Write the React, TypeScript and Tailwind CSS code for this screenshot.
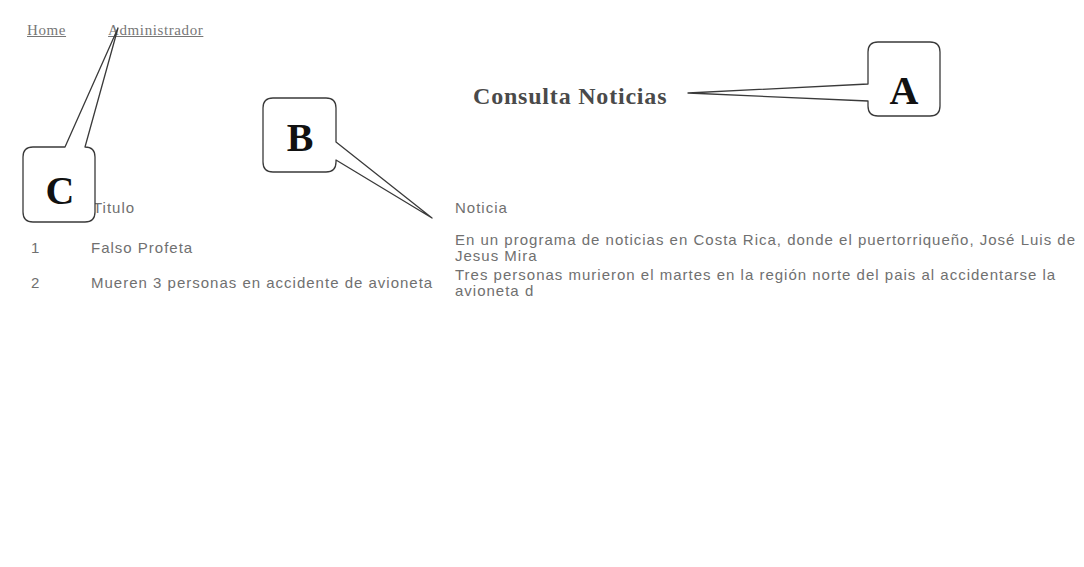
import React from "react";

const rows = [
  {
    n: "1",
    t: "Falso Profeta",
    d: "En un programa de noticias en Costa Rica, donde el puertorriqueño, José Luis de Jesus Mira",
  },
  {
    n: "2",
    t: "Mueren 3 personas en accidente de avioneta",
    d: "Tres personas murieron el martes en la región norte del pais al accidentarse la avioneta d",
  },
];

function Callouts() {
  return (
    <svg
      className="absolute left-0 top-0 pointer-events-none"
      width={1084}
      height={567}
      viewBox="0 0 1084 567"
    >
      <g fill="#fff" stroke="#3a3a3a" strokeWidth={1.3} strokeLinejoin="round">
        <path d="M878,42 H930 Q940,42 940,52 V106 Q940,116 930,116 H878 Q868,116 868,106 V101 L688,93 L868,84 V52 Q868,42 878,42 Z" />
        <path d="M273,98 H326 Q336,98 336,108 V142 L432,218 L336,160 V162 Q336,172 326,172 H273 Q263,172 263,162 V108 Q263,98 273,98 Z" />
        <path d="M33,147 H65 L118,28 L85,147 Q95,147 95,157 V212 Q95,222 85,222 H33 Q23,222 23,212 V157 Q23,147 33,147 Z" />
      </g>
      <g
        fill="#111"
        fontFamily="'Liberation Serif', serif"
        fontWeight="bold"
        fontSize="40"
        textAnchor="middle"
      >
        <text x="904" y="104">A</text>
        <text x="300" y="151">B</text>
        <text x="60" y="204">C</text>
      </g>
    </svg>
  );
}

export default function App() {
  return (
    <div className="relative w-[1084px] h-[567px] bg-white overflow-hidden">
      <div className="flex gap-[42px] pl-[27px] pt-[21px] text-[15px] leading-[18px] text-[#777] tracking-[0.6px] font-['Liberation_Serif',serif]">
        <span className="underline">Home</span>
        <span className="underline">Administrador</span>
      </div>
      <div className="pl-[473px] pt-[43px] text-[24px] leading-[28px] font-bold text-[#4a4a4a] tracking-[0.8px] font-['Liberation_Serif',serif]">
        Consulta Noticias
      </div>
      <div className="pt-[90px] font-['Liberation_Sans',sans-serif] text-[15px] text-[#707070] tracking-[1px]">
        <div className="grid grid-cols-[91px_364px_625px] leading-[16px]">
          <div />
          <div className="pl-[2px]">Titulo</div>
          <div>Noticia</div>
        </div>
        <div className="mt-[16px] flex flex-col gap-[3px]">
          {rows.map((r) => (
            <div key={r.n} className="grid grid-cols-[91px_364px_625px] items-center leading-[16px]">
              <div className="pl-[31px]">{r.n}</div>
              <div>{r.t}</div>
              <div>{r.d}</div>
            </div>
          ))}
        </div>
      </div>
      <Callouts />
    </div>
  );
}
